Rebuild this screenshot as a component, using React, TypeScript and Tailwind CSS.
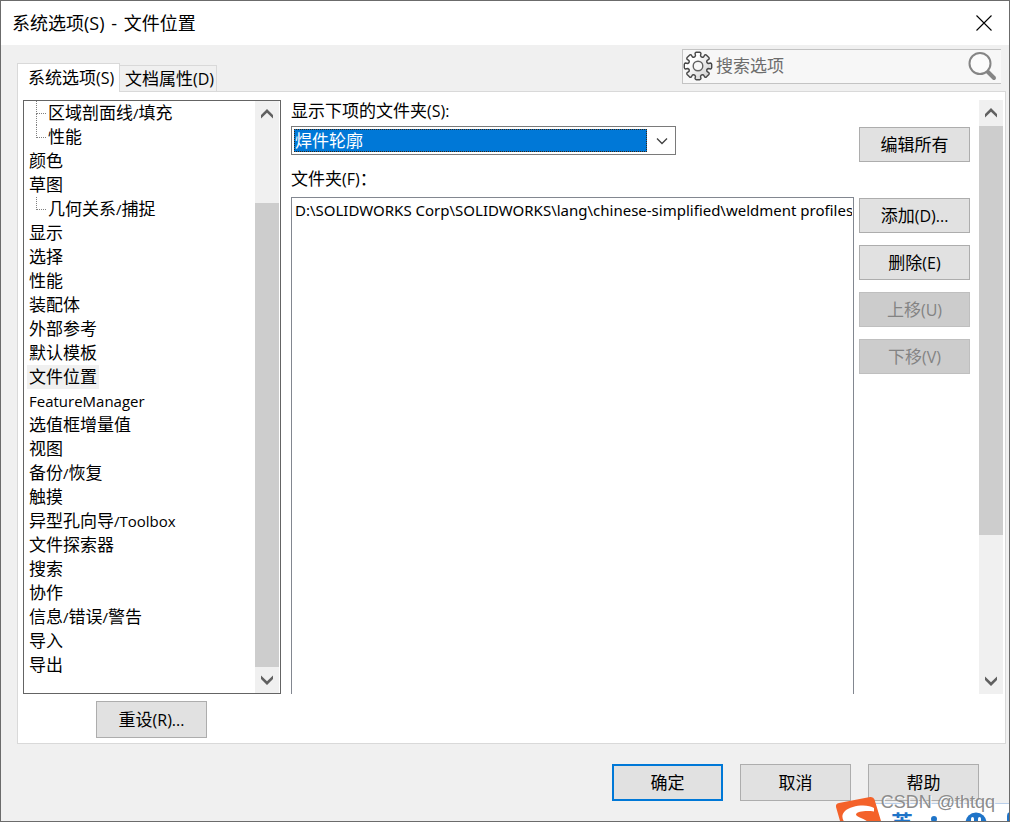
import React, { useState } from 'react';

interface TreeItem {
  name: string;
  branch?: 'middle' | 'last';
}

const treeItems: TreeItem[] = [
  { name: '区域剖面线/填充', branch: 'middle' },
  { name: '性能', branch: 'last' },
  { name: '颜色' },
  { name: '草图' },
  { name: '几何关系/捕捉', branch: 'last' },
  { name: '显示' },
  { name: '选择' },
  { name: '性能' },
  { name: '装配体' },
  { name: '外部参考' },
  { name: '默认模板' },
  { name: '文件位置' },
  { name: 'FeatureManager' },
  { name: '选值框增量值' },
  { name: '视图' },
  { name: '备份/恢复' },
  { name: '触摸' },
  { name: '异型孔向导/Toolbox' },
  { name: '文件探索器' },
  { name: '搜索' },
  { name: '协作' },
  { name: '信息/错误/警告' },
  { name: '导入' },
  { name: '导出' },
];

const folders = ['D:\\SOLIDWORKS Corp\\SOLIDWORKS\\lang\\chinese-simplified\\weldment profiles'];

// Latin runs are set a little smaller than the Chinese around them
const Mixed = ({ text }: { text: string }) => (
  <>
    {text.split(/([\x21-\x7e]+)/).map((part, i) =>
      i % 2 === 1 ? (
        <span key={i} className={part.startsWith('(') ? 'text-[16px]' : 'text-[15px]'}>{part}</span>
      ) : (
        part
      )
    )}
  </>
);

interface DialogButtonProps {
  text: string;
  primary?: boolean;
  tall?: boolean;
  disabled?: boolean;
}

const DialogButton = ({ text, primary, tall, disabled }: DialogButtonProps) => (
  <button
    type="button"
    disabled={disabled}
    className={`flex w-[111px] shrink-0 items-center justify-center whitespace-nowrap leading-6 ${
      tall ? 'h-[37px]' : 'h-[35px]'
    } ${primary ? 'border-2 border-[#0078d7]' : 'border border-[#adadad]'} ${
      disabled ? 'border-[#bfbfbf] bg-[#cccccc] text-[#838383]' : 'bg-[#e1e1e1] hover:bg-[#e5f1fb]'
    }`}
  >
    <span><Mixed text={text} /></span>
  </button>
);

const ScrollArrow = ({ down }: { down?: boolean }) => (
  <button
    type="button"
    aria-label={down ? '向下滚动' : '向上滚动'}
    className="flex h-[26px] w-full shrink-0 items-center justify-center"
  >
    <svg width="12" height="10" viewBox="0 0 12 10" className={down ? 'rotate-180' : ''}>
      <path d="M0 6 L6 0 L12 6 V9.5 L6 3.7 L0 9.5 Z" fill="#606060" />
    </svg>
  </button>
);

const ScrollBar = ({ start, size }: { start: number; size: number }) => (
  <div className="flex w-6 shrink-0 flex-col bg-[#f0f0f0]">
    <ScrollArrow />
    <div className="flex flex-1 flex-col">
      <div style={{ height: `${start}%` }} />
      <div className="bg-[#cdcdcd]" style={{ height: `${size}%` }} />
    </div>
    <ScrollArrow down />
  </div>
);

// Eight teeth with rounded valleys between them
const gearPath = () => {
  const pt = (r: number, a: number) => `${(15 + r * Math.cos(a)).toFixed(2)} ${(15 + r * Math.sin(a)).toFixed(2)}`;
  let d = '';
  for (let i = 0; i < 8; i++) {
    const a = (i * Math.PI) / 4;
    d += `${i === 0 ? 'M' : 'L'}${pt(10.5, a - 0.24)} L${pt(13, a - 0.23)} Q${pt(13.8, a - 0.2)} ${pt(13.8, a - 0.12)}`;
    d += ` L${pt(13.8, a + 0.12)} Q${pt(13.8, a + 0.2)} ${pt(13, a + 0.23)} L${pt(10.5, a + 0.24)}`;
    d += ` Q${pt(8.8, a + Math.PI / 8)} ${pt(10.5, a + Math.PI / 4 - 0.24)}`;
  }
  return d + 'Z';
};

const GearIcon = () => (
  <svg width="30" height="30" viewBox="0 0 30 30" className="shrink-0">
    <defs>
      <linearGradient id="gear" x1="0" y1="0" x2="1" y2="1">
        <stop offset="0.3" stopColor="#ffffff" />
        <stop offset="1" stopColor="#c8c8c8" />
      </linearGradient>
    </defs>
    <path d={gearPath()} fill="url(#gear)" stroke="#484848" strokeWidth="1.4" strokeLinejoin="round" />
    <circle cx="15" cy="15" r="4.8" fill="#f7f7f7" stroke="#606060" strokeWidth="1.4" />
  </svg>
);

const SearchIcon = () => (
  <svg width="30" height="30" viewBox="0 0 30 30">
    <path d="M20.5 20.5 L27 27" stroke="#858585" strokeWidth="4" strokeLinecap="round" />
    <circle cx="13" cy="12.5" r="10.5" fill="#fbfbfb" stroke="#858585" strokeWidth="2" />
  </svg>
);

const TreeBranch = ({ last }: { last: boolean }) => (
  <span className="ml-[9px] flex w-[10px] shrink-0 flex-col">
    <span className="h-[13px] border-b border-l border-dotted border-[#808080]" />
    <span className={last ? 'h-[11px]' : 'h-[11px] border-l border-dotted border-[#808080]'} />
  </span>
);

// Input method bar that peeks in from the bottom of the screen
const ImeBar = () => (
  <div className="pointer-events-none absolute right-0 bottom-0 h-8 w-[176px] overflow-hidden">
    <div className="mt-[14px] ml-8 flex h-8 border-t border-[#b9cfea] bg-white text-[#1f74c8]">
      <span className="mt-1 ml-[26px] text-[22px] leading-7 font-bold">英</span>
      <span className="mt-3 ml-[18px] size-[6px] shrink-0 rounded-full bg-[#1f74c8]" />
      <svg width="22" height="22" viewBox="0 0 22 22" className="mt-2 ml-[28px] shrink-0">
        <circle cx="11" cy="11" r="10.5" fill="#1f74c8" />
        <rect x="6" y="5" width="3" height="6" rx="1.5" fill="#fff" />
        <rect x="13" y="5" width="3" height="6" rx="1.5" fill="#fff" />
      </svg>
      <span className="mt-2 ml-5 h-6 w-4 shrink-0 rounded-tl-sm bg-[#1f74c8]" />
    </div>
    <svg width="50" height="32" viewBox="0 0 50 32" className="absolute top-0 left-0">
      <path d="M3 18 Q2.500 14.500 6 14 L37 8 Q40.500 7.500 41.500 10.500 L48 32 H7 Z" fill="#f4622a" />
      <path d="M41 19 C35 14.500 18 16 12 22 C8 26 9 30 12 34 L36 34 C33 30 23 28 23 25.500 C24 22 34 21.500 41 22.500 Z" fill="#fff" />
    </svg>
  </div>
);

const App = () => {
  const [selected, setSelected] = useState(11);
  const [search, setSearch] = useState('');

  return (
    <div className="relative flex min-h-screen flex-col overflow-hidden border border-[#6b6b6b] bg-[#f0f0f0] font-['Open_Sans','Noto_Sans_CJK_SC',sans-serif] text-[17px] leading-6 text-black">
      {/* Title bar */}
      <header className="flex h-11 shrink-0 items-center justify-between bg-white pr-4 pb-px pl-[11px]">
        <h1 className="text-[18px]">
          系统选项(S) <span className="px-[2px]">-</span> 文件位置
        </h1>
        <button type="button" aria-label="关闭" className="p-px">
          <svg width="16" height="16" viewBox="0 0 16 16">
            <path d="M0.500 0.500 L15.500 15.500 M15.500 0.500 L0.500 15.500" stroke="#000" strokeWidth="1.1" />
          </svg>
        </button>
      </header>

      {/* Tabs and search */}
      <div className="flex h-[46px] shrink-0 justify-between pr-2 pl-4">
        <div role="tablist" className="flex items-end whitespace-nowrap">
          <button
            type="button"
            role="tab"
            aria-selected="true"
            className="relative -mb-px h-[29px] w-[103px] border border-b-0 border-[#d9d9d9] bg-white pl-[10px] text-left"
          >
            <Mixed text="系统选项(S)" />
          </button>
          <button
            type="button"
            role="tab"
            aria-selected="false"
            className="h-[26px] w-[97px] border border-b-0 border-l-0 border-[#d9d9d9] pl-[5px] text-left"
          >
            <Mixed text="文档属性(D)" />
          </button>
        </div>
        <div className="mt-1 flex h-[35px] w-[319px] items-center border border-r-0 border-[#c3c3c3] bg-[#f7f7f7] pb-px">
          <GearIcon />
          <input
            type="text"
            aria-label="搜索选项"
            placeholder="搜索选项"
            value={search}
            onChange={(e) => setSearch(e.target.value)}
            className="ml-[3px] min-w-0 flex-1 bg-transparent outline-none placeholder:text-[#6d6d6d]"
          />
          <button type="button" aria-label="搜索" className="mr-1">
            <SearchIcon />
          </button>
        </div>
      </div>

      {/* Tab page */}
      <main className="mr-[3px] ml-4 flex flex-1 flex-col border border-[#d9d9d9] bg-white pt-2 pr-[2px] pb-[5px] pl-[5px]">
        <div className="flex flex-1">
          <nav className="flex w-[258px] shrink-0 border border-[#646464] pr-px">
            <ul className="flex-1 pb-4 pl-[3px]">
              {treeItems.map((item, index) => (
                <li key={index} className="flex h-6">
                  {item.branch && <TreeBranch last={item.branch === 'last'} />}
                  <button
                    type="button"
                    onClick={() => setSelected(index)}
                    className={`px-[2px] whitespace-nowrap ${selected === index ? 'bg-[#f0f0f0]' : ''}`}
                  >
                    <Mixed text={item.name} />
                  </button>
                </li>
              ))}
            </ul>
            <ScrollBar start={14} size={86} />
          </nav>

          <section className="ml-[10px] flex min-w-0 flex-1 flex-col">
            <label htmlFor="folderType" className="leading-[22px]">
              <Mixed text="显示下项的文件夹(S):" />
            </label>
            <div className="mt-1 flex h-[29px] w-[385px] max-w-full items-center border border-[#7a7a7a] p-[2px]">
              <select
                id="folderType"
                className="h-[23px] min-w-0 flex-1 appearance-none border border-dotted border-[#3a2410] bg-[#0078d7] leading-5 text-white outline-none"
              >
                <option>焊件轮廓</option>
              </select>
              <svg width="26" height="12" viewBox="0 0 26 12" className="pointer-events-none">
                <path d="M10 3.500 L15 8.500 L20 3.500" fill="none" stroke="#404040" strokeWidth="1.3" />
              </svg>
            </div>

            <span id="foldersLabel" className="mt-[13px] leading-[22px]">
              <Mixed text="文件夹(F)：" />
            </span>
            <ul
              aria-labelledby="foldersLabel"
              className="mt-[7px] flex-1 border border-b-0 border-[#828790] px-px pl-[3px]"
            >
              {folders.map((folder) => (
                <li key={folder} className="overflow-hidden font-['Noto_Sans',sans-serif] text-[15px] whitespace-nowrap">
                  {folder}
                </li>
              ))}
            </ul>
          </section>

          <div className="mt-[27px] mr-[9px] ml-[5px] flex flex-col gap-3">
            <DialogButton text="编辑所有" />
            <div className="h-3" />
            <DialogButton text="添加(D)..." />
            <DialogButton text="删除(E)" />
            <DialogButton text="上移(U)" disabled />
            <DialogButton text="下移(V)" disabled />
          </div>

          <ScrollBar start={0} size={75.5} />
        </div>

        <div className="mt-[7px] flex w-[257px] justify-center">
          <DialogButton text="重设(R)..." tall />
        </div>
      </main>

      {/* Footer */}
      <footer className="flex shrink-0 justify-end gap-[17px] py-5 pr-[30px]">
        <DialogButton text="确定" primary tall />
        <DialogButton text="取消" tall />
        <DialogButton text="帮助" tall />
      </footer>

      <ImeBar />
      <div className="pointer-events-none absolute right-[14px] bottom-[7px] font-['Liberation_Sans',sans-serif] text-[18px] text-[#8c8c8c] [text-shadow:1px_1px_0_#ffffff]">
        CSDN @thtqq
      </div>
    </div>
  );
};

export default App;
